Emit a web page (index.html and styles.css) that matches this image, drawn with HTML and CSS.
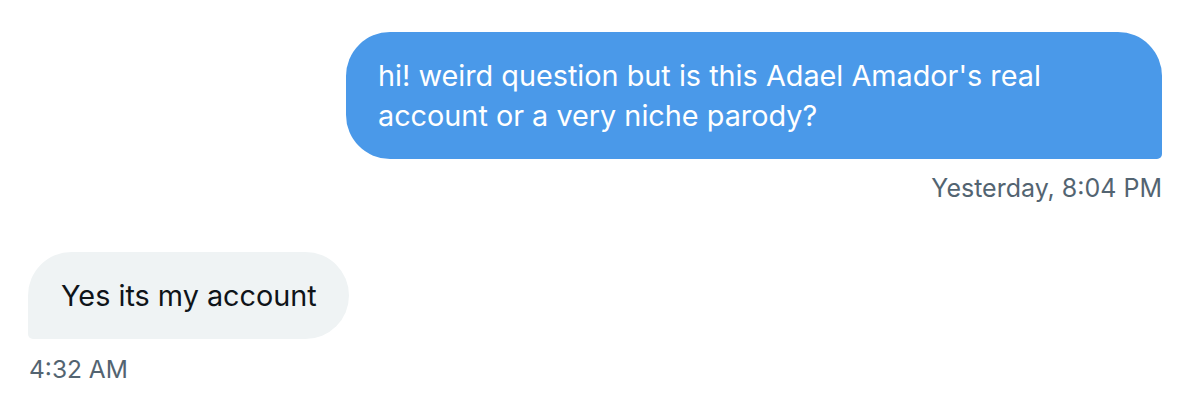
FILE: index.html
```html
<!DOCTYPE html>
<html>
<head>
<meta charset="utf-8">
<link rel="stylesheet" href="styles.css">
</head>
<body>
<div class="thread">
  <div class="msg msg-out">
    <div class="bubble bubble-out">hi! weird question but is this Adael Amador's real account or a very niche parody?</div>
    <div class="time">Yesterday, 8:04 PM</div>
  </div>
  <div class="msg msg-in">
    <div class="bubble bubble-in">Yes its my account</div>
    <div class="time">4:32 AM</div>
  </div>
</div>
</body>
</html>
```

FILE: styles.css
```css
html, body {
  margin: 0;
  padding: 0;
  background: #ffffff;
}
body {
  font-family: Inter, "Noto Sans", "Liberation Sans", sans-serif;
  width: 1192px;
  height: 416px;
  overflow: hidden;
}
.thread {
  display: flex;
  flex-direction: column;
  padding: 32px 30px 0 28px;
}
.msg {
  display: flex;
  flex-direction: column;
}
.msg-out {
  align-items: flex-end;
}
.msg-in {
  align-items: flex-start;
  margin-top: 49px;
}
.bubble {
  box-sizing: border-box;
  font-size: 28.8px;
  line-height: 40px;
  padding: 24px 32px 23px;
  border-radius: 44px;
}
.bubble-out {
  width: 816px;
  background: #4a99e9;
  color: #ffffff;
  border-bottom-right-radius: 5px;
}
.bubble-in {
  background: #eff3f4;
  color: #0f1419;
  padding-left: 33px;
  border-bottom-left-radius: 5px;
}
.time {
  margin-top: 14px;
  font-size: 25px;
  line-height: 30px;
  color: #536471;
}
.msg-in .time {
  margin-top: 15px;
  margin-left: 1px;
  font-size: 24.5px;
}
```
